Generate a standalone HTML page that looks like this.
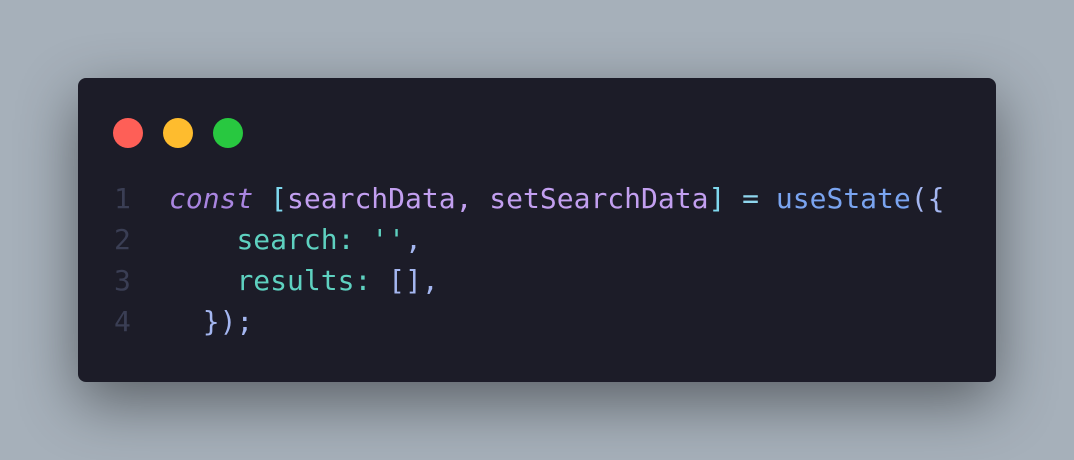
<!DOCTYPE html>
<html><head><meta charset="utf-8"><style>
html,body{margin:0;padding:0;}
body{width:1074px;height:460px;background:#a6b0ba;position:relative;overflow:hidden;}
.win{position:absolute;left:78px;top:78px;width:918px;height:304px;background:#1c1c28;border-radius:8px;box-shadow:0 20px 60px rgba(0,0,0,0.45);}
.dot{position:absolute;top:40px;width:30px;height:30px;border-radius:50%;}
.code{position:absolute;left:0;top:100px;font-family:"DejaVu Sans Mono","Liberation Mono",monospace;font-size:28px;line-height:41px;color:#c3a6f0;}
.ln{display:inline-block;width:91px;text-align:left;padding-left:36px;box-sizing:border-box;color:#3a3e54;}
.line{display:block;height:41px;white-space:pre;}
.k{color:#a985e0;font-style:italic}
.p{color:#7fd8ee}
.v{color:#c29ff0}
.f{color:#7aa4f0}
.o{color:#8fd6ee}
.pr{color:#5ed1c0}
.b{color:#a4b6f0}
</style></head><body>
<div class="win">
<div class="dot" style="left:35px;background:#fe5f57"></div>
<div class="dot" style="left:85px;background:#febc2e"></div>
<div class="dot" style="left:135px;background:#28c840"></div>
<div class="code"><span class="line"><span class="ln">1</span><span class="k">const</span> <span class="p">[</span><span class="v">searchData, setSearchData</span><span class="p">]</span> <span class="o">=</span> <span class="f">useState</span><span class="b">({</span></span><span class="line"><span class="ln">2</span>    <span class="pr">search:</span> <span class="pr">''</span><span class="b">,</span></span><span class="line"><span class="ln">3</span>    <span class="pr">results:</span> <span class="b">[],</span></span><span class="line"><span class="ln">4</span>  <span class="b">});</span></span></div>
</div>
</body></html>
